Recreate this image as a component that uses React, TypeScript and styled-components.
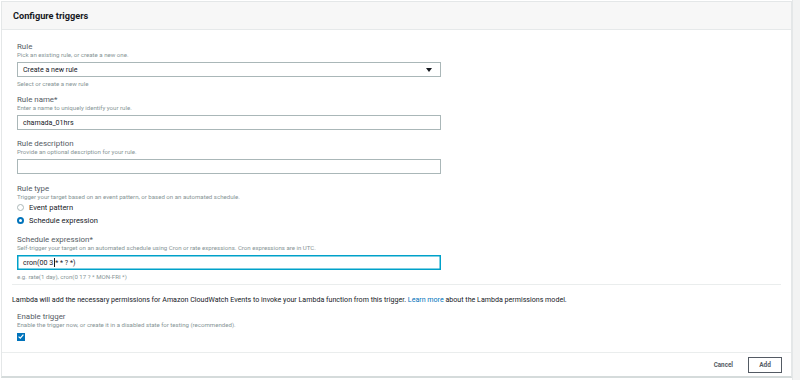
import React from 'react'
import styled, { createGlobalStyle } from 'styled-components'

const GlobalStyle = createGlobalStyle`
  html, body {
    margin: 0;
    padding: 0;
    background: #ffffff;
    font-family: Roboto, "Liberation Sans", Arial, sans-serif;
    color: #16191f;
  }
`

const Screen = styled.div`
  display: flex;
  width: 800px;
  height: 380px;
  background: #ffffff;
`

const Panel = styled.div`
  flex: 0 0 791px;
  margin: 1px 0 2px 1px;
  border: 1px solid #e4e7e8;
  border-bottom: 2px solid #d5dbdb;
  display: flex;
  flex-direction: column;
  box-sizing: border-box;
`

const ScrollStrip = styled.div`
  flex: 1;
  background: #f2f3f3;
  border-left: 1px solid #e4e7e8;
`

const Header = styled.div`
  height: 28px;
  background: #f7f7f7;
  border-bottom: 1px solid #e6e9ea;
  display: flex;
  align-items: center;
  padding-left: 11px;
  box-sizing: border-box;
`

const Title = styled.h2`
  margin: 0;
  font-size: 9.2px;
  font-weight: 700;
  color: #16191f;
`

const Body = styled.div`
  flex: 1;
  padding: 12px 10px 0 10px;
  display: flex;
  flex-direction: column;
`

const Fields = styled.div`
  padding-left: 5px;
  display: flex;
  flex-direction: column;
  gap: 9.4px;
`

const Field = styled.div`
  display: flex;
  flex-direction: column;
`

const Label = styled.div`
  font-size: 7.9px;
  line-height: 9px;
  color: #545b64;
`

const Desc = styled.div`
  font-size: 6.1px;
  line-height: 8px;
  color: #879596;
`

const Hint = styled(Desc)`
  margin-top: 2.5px;
  margin-bottom: -2px;
`

const InputBox = styled.div<{ $focused?: boolean }>`
  width: 424px;
  height: 15px;
  margin-top: 3px;
  box-sizing: border-box;
  border: 1px solid ${({ $focused }) => ($focused ? '#00a1c9' : '#aab7b8')};
  box-shadow: ${({ $focused }) => ($focused ? 'inset 0 0 0 0.5px #00a1c9' : 'none')};
  display: flex;
  align-items: center;
  justify-content: space-between;
  padding: 0 8px 0 5px;
  font-size: 7.1px;
  color: #16191f;
`

const Caret = styled.span`
  display: inline-block;
  width: 1px;
  height: 9px;
  background: #16191f;
  vertical-align: middle;
  margin: 0 0.5px;
`

const Arrow = styled.span`
  width: 0;
  height: 0;
  border-left: 3px solid transparent;
  border-right: 3px solid transparent;
  border-top: 4px solid #16191f;
`

const Radios = styled.div`
  display: flex;
  flex-direction: column;
  gap: 3px;
  margin-top: 2px;
`

const RadioRow = styled.label`
  display: flex;
  align-items: center;
  gap: 5px;
  font-size: 7.5px;
  line-height: 10px;
  color: #16191f;
`

const RadioDot = styled.span<{ $checked?: boolean }>`
  width: 7px;
  height: 7px;
  border-radius: 50%;
  box-sizing: border-box;
  background: #ffffff;
  border: ${({ $checked }) => ($checked ? '2.5px solid #0073bb' : '1px solid #aab7b8')};
`

const Divider = styled.hr`
  border: 0;
  border-top: 1px solid #eaeded;
  margin: 5px 0 0 0;
`

const Notice = styled.p`
  margin: 9px 0 0 0;
  font-size: 7.1px;
  line-height: 11px;
  color: #16191f;
`

const Link = styled.a`
  color: #0073bb;
  text-decoration: none;
`

const EnableField = styled(Field)`
  margin-top: 7px;
  padding-left: 5px;
`

const CheckBox = styled.span`
  width: 8px;
  height: 8px;
  margin-top: 4px;
  background: #0073bb;
  display: flex;
  align-items: center;
  justify-content: center;
`

const Footer = styled.div`
  height: 23px;
  margin-top: auto;
  border-top: 1px solid #eaeded;
  display: flex;
  align-items: center;
  justify-content: flex-end;
  gap: 15px;
  padding-right: 9px;
`

const TextButton = styled.button`
  border: 0;
  background: none;
  padding: 0;
  font-family: inherit;
  font-size: 6.3px;
  font-weight: 700;
  color: #545b64;
`

const OutlineButton = styled.button`
  width: 34px;
  height: 16px;
  border: 1px solid #545b64;
  background: #ffffff;
  padding: 0;
  font-family: inherit;
  font-size: 6.5px;
  font-weight: 700;
  color: #545b64;
`

const App: React.FC = () => {
  return (
    <Screen>
      <GlobalStyle />
      <Panel>
        <Header>
          <Title>Configure triggers</Title>
        </Header>
        <Body>
          <Fields>
            <Field>
              <Label>Rule</Label>
              <Desc>Pick an existing rule, or create a new one.</Desc>
              <InputBox>
                <span>Create a new rule</span>
                <Arrow />
              </InputBox>
              <Hint>Select or create a new rule</Hint>
            </Field>
            <Field>
              <Label>Rule name*</Label>
              <Desc>Enter a name to uniquely identify your rule.</Desc>
              <InputBox>
                <span>chamada_01hrs</span>
              </InputBox>
            </Field>
            <Field>
              <Label>Rule description</Label>
              <Desc>Provide an optional description for your rule.</Desc>
              <InputBox />
            </Field>
            <Field>
              <Label>Rule type</Label>
              <Desc>Trigger your target based on an event pattern, or based on an automated schedule.</Desc>
              <Radios>
                <RadioRow>
                  <RadioDot />
                  Event pattern
                </RadioRow>
                <RadioRow>
                  <RadioDot $checked />
                  Schedule expression
                </RadioRow>
              </Radios>
            </Field>
            <Field>
              <Label>Schedule expression*</Label>
              <Desc>Self-trigger your target on an automated schedule using Cron or rate expressions. Cron expressions are in UTC.</Desc>
              <InputBox $focused>
                <span>
                  cron(00 3<Caret />* * ? *)
                </span>
              </InputBox>
              <Hint>e.g. rate(1 day), cron(0 17 ? * MON-FRI *)</Hint>
            </Field>
          </Fields>
          <Divider />
          <Notice>
            Lambda will add the necessary permissions for Amazon CloudWatch Events to invoke your Lambda function from this trigger.{' '}
            <Link href="#">Learn more</Link> about the Lambda permissions model.
          </Notice>
          <EnableField>
            <Label>Enable trigger</Label>
            <Desc>Enable the trigger now, or create it in a disabled state for testing (recommended).</Desc>
            <CheckBox>
              <svg width="6" height="5" viewBox="0 0 6 5">
                <path d="M0.6 2.6 L2.3 4.1 L5.4 0.7" fill="none" stroke="#ffffff" strokeWidth="1.2" />
              </svg>
            </CheckBox>
          </EnableField>
        </Body>
        <Footer>
          <TextButton>Cancel</TextButton>
          <OutlineButton>Add</OutlineButton>
        </Footer>
      </Panel>
      <ScrollStrip />
    </Screen>
  )
}

export default App
